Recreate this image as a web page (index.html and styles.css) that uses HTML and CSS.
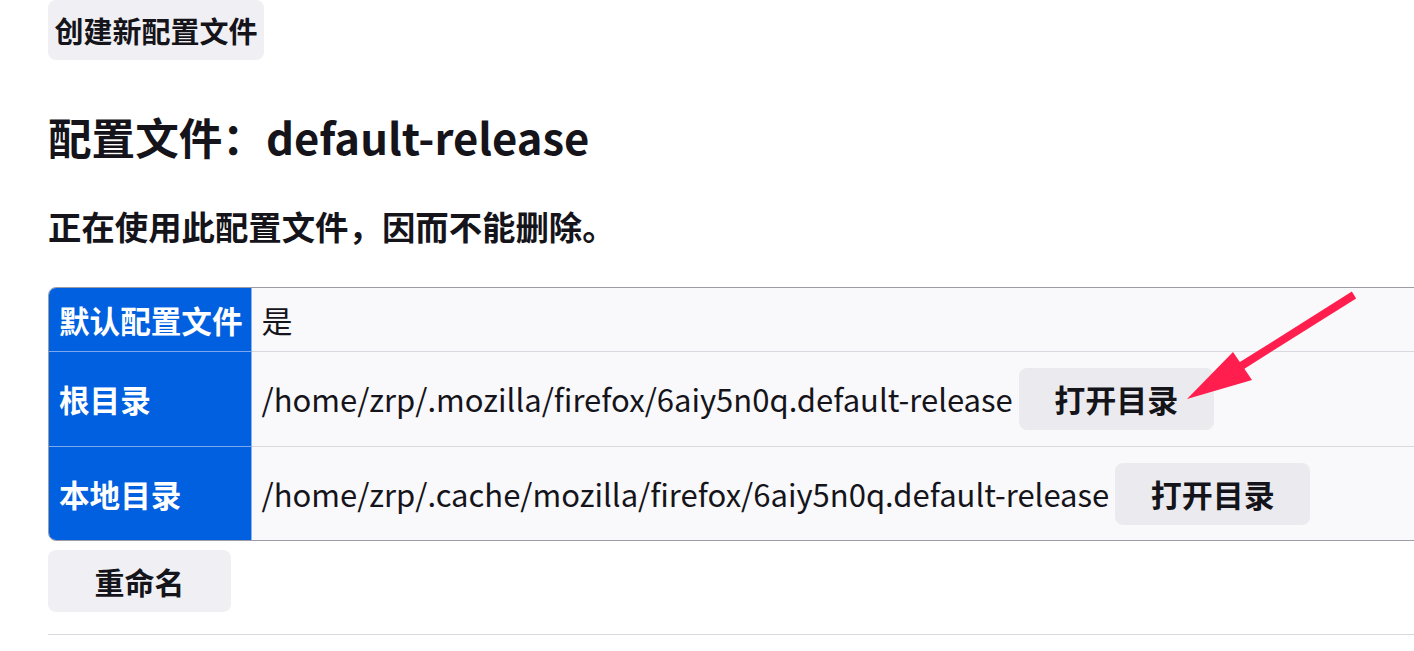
FILE: index.html
```html
<!DOCTYPE html>
<html lang="zh-CN">
<head>
<meta charset="utf-8">
<title>关于配置文件</title>
<link rel="stylesheet" href="styles.css">
</head>
<body>
<main class="page">
  <button class="btn btn-create">创建新配置文件</button>
  <h2 class="title">配置文件：default-release</h2>
  <h3 class="note">正在使用此配置文件，因而不能删除。</h3>
  <div class="table-wrap">
    <table class="info">
      <colgroup>
        <col class="col-head">
        <col>
      </colgroup>
      <tr class="row-short">
        <th>默认配置文件</th>
        <td>是</td>
      </tr>
      <tr class="row-tall">
        <th>根目录</th>
        <td>/home/zrp/.mozilla/firefox/6aiy5n0q.default-release<button class="btn btn-open">打开目录</button></td>
      </tr>
      <tr>
        <th>本地目录</th>
        <td>/home/zrp/.cache/mozilla/firefox/6aiy5n0q.default-release<button class="btn btn-open">打开目录</button></td>
      </tr>
    </table>
  </div>
  <div class="actions">
    <button class="btn btn-rename">重命名</button>
  </div>
  <hr class="sep">
</main>
<svg class="arrow" width="1414" height="651" viewBox="0 0 1414 651" aria-hidden="true">
  <line x1="1354" y1="295" x2="1238" y2="368" stroke="#ff1e4d" stroke-width="8" stroke-linecap="butt"/>
  <polygon points="1187,399 1233,352 1252,380" fill="#ff1e4d"/>
</svg>
</body>
</html>
```
FILE: styles.css
```css
html, body {
  margin: 0;
  padding: 0;
  overflow: hidden;
  background: #ffffff;
}
body {
  font-family: "Noto Sans CJK SC", "Noto Sans", sans-serif;
  color: #15141a;
  position: relative;
  width: 1414px;
  height: 651px;
}
.page {
  padding: 0 0 0 48px;
  display: flex;
  flex-direction: column;
  align-items: flex-start;
}
.btn {
  font-family: "Noto Sans CJK SC", "Noto Sans", sans-serif;
  font-weight: 700;
  font-size: 30px;
  color: #15141a;
  background: #f0f0f4;
  border: none;
  border-radius: 8px;
  line-height: 40px;
  margin: 0;
}
.btn-create {
  height: 60px;
  width: 216px;
  padding: 0;
  font-size: 29px;
}
.title {
  margin: 49px 0 0;
  font-size: 43.6px;
  line-height: 54px;
  font-weight: 700;
}
.note {
  margin: 42px 0 0;
  font-size: 33.4px;
  line-height: 42px;
  font-weight: 700;
}
.table-wrap {
  margin-top: 40px;
  width: 1460px;
  border: 1px solid #9d9da6;
  border-radius: 8px;
  overflow: hidden;
  background: #f9f9fb;
}
.info {
  border-collapse: collapse;
  table-layout: fixed;
  width: 100%;
  font-size: 31px;
}
.col-head {
  width: 202px;
}
.info th {
  background: #0060df;
  color: #ffffff;
  font-weight: 700;
  font-size: 30.6px;
  text-align: left;
  padding: 0 0 0 10px;
  border-right: 1px solid #8db3ee;
  border-bottom: 1px solid #7aa7ee;
  white-space: nowrap;
  overflow: hidden;
}
.info td {
  padding: 0 10px;
  border-bottom: 1px solid #d8d8de;
  white-space: nowrap;
  line-height: 43px;
  height: 93px;
}
.info tr:last-child th,
.info tr:last-child td {
  border-bottom: none;
}
.info .row-short td,
.info .row-short th {
  height: 63px;
}
.info .row-tall td,
.info .row-tall th {
  height: 94px;
}
.btn-open {
  background: #ebebef;
  width: 195px;
  height: 62px;
  padding: 0;
  margin-left: 6px;
  font-size: 31px;
  vertical-align: baseline;
}
.actions {
  margin-top: 9px;
}
.btn-rename {
  width: 183px;
  height: 62px;
  padding: 0;
}
.sep {
  align-self: stretch;
  margin: 22px 0 0;
  border: none;
  border-top: 1px solid #d8d8de;
  height: 0;
}
.arrow {
  position: absolute;
  left: 0;
  top: 0;
  pointer-events: none;
}
```
